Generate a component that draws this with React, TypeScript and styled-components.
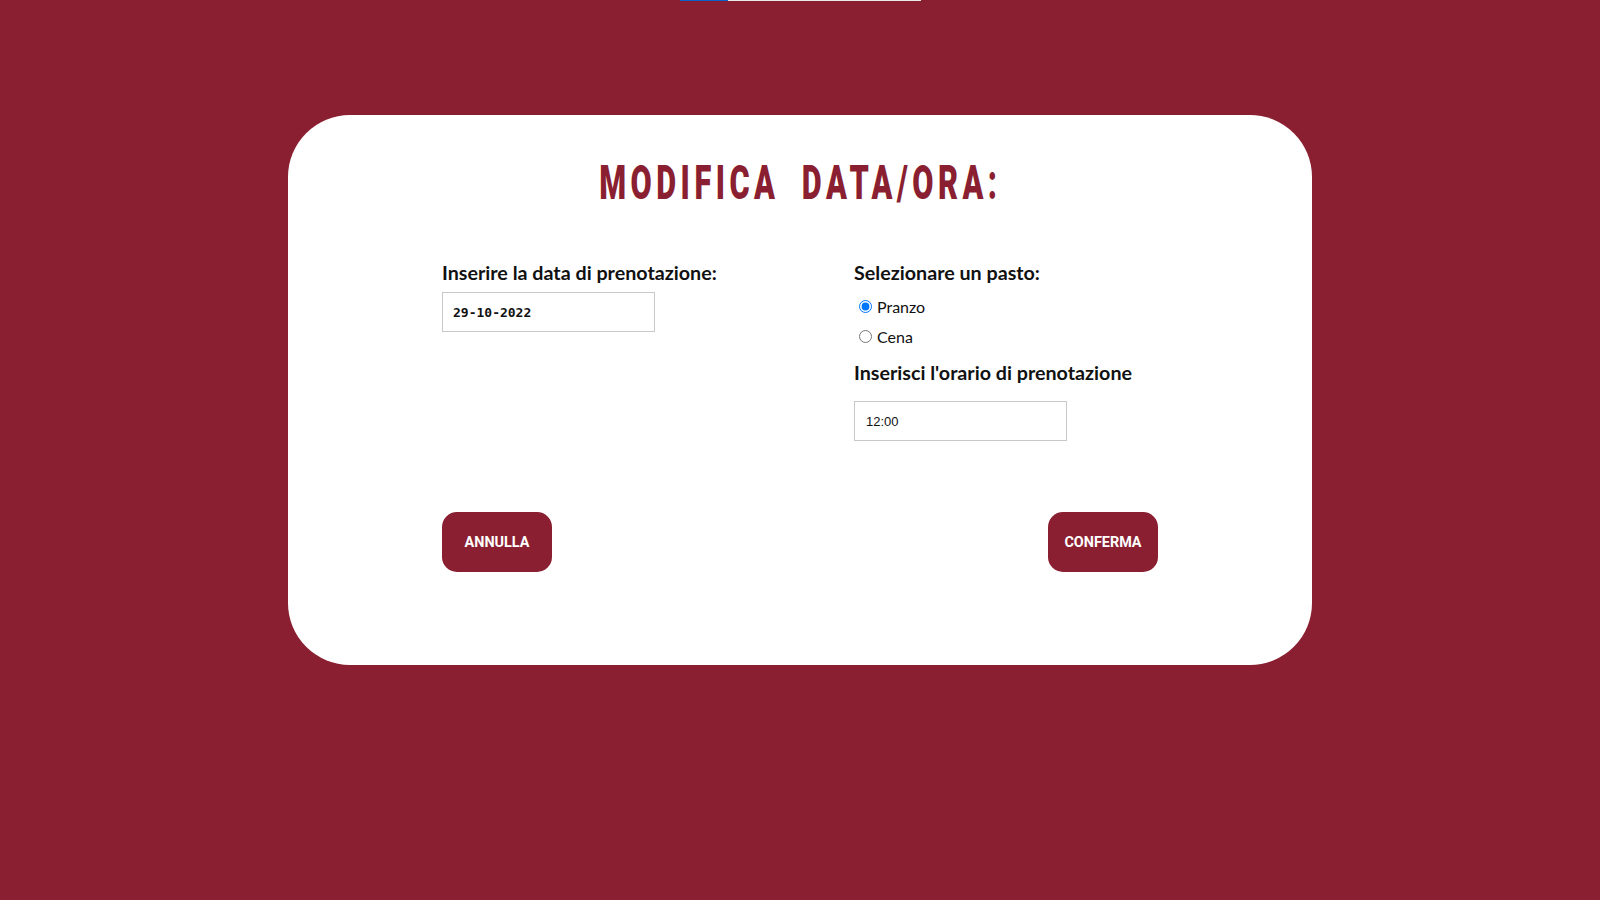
import React from "react";
import styled, { createGlobalStyle } from "styled-components";

const GlobalStyle = createGlobalStyle`
  html, body { margin: 0; padding: 0; }
  body {
    background: #8a1f31;
    font-family: Lato, "Noto Sans", sans-serif;
    min-height: 900px;
  }
`;

const TopBar = styled.div`
  display: flex;
  width: 241px;
  height: 1px;
  margin: 0 auto;
  background: #e9e9e9;
`;

const TopBarFill = styled.div`
  width: 48px;
  height: 100%;
  background: #0a62c9;
`;

const Card = styled.main`
  box-sizing: border-box;
  width: 1024px;
  height: 550px;
  margin: 114px auto 0;
  background: #ffffff;
  border-radius: 62px;
  padding-top: 38px;
`;

const Title = styled.h1`
  margin: 0;
  text-align: center;
  line-height: 60px;
  height: 60px;
`;

const TitleText = styled.span`
  display: inline-block;
  transform: scaleX(0.64);
  transform-origin: center;
  font-family: Roboto, "Liberation Sans", sans-serif;
  font-weight: 900;
  font-size: 48px;
  letter-spacing: 7px;
  word-spacing: 16px;
  white-space: nowrap;
  color: #8a1f31;
`;

const Form = styled.form`
  width: 716px;
  margin: 0 auto;
  padding-top: 48px;
`;

const Columns = styled.div`
  display: grid;
  grid-template-columns: 412px 1fr;
`;

const Column = styled.div`
  display: flex;
  flex-direction: column;
  align-items: flex-start;
`;

const Label = styled.label<{ $top?: number }>`
  display: block;
  margin-top: ${(p) => p.$top ?? 0}px;
  font-family: Lato, sans-serif;
  font-weight: 700;
  font-size: 19.7px;
  line-height: 24px;
  color: #111;
`;

const TextField = styled.input<{ $mono?: boolean; $top?: number }>`
  box-sizing: border-box;
  width: 213px;
  height: 40px;
  margin-top: ${(p) => p.$top ?? 7}px;
  padding: 0 ${(p) => (p.$mono ? 10 : 11)}px;
  border: 1px solid #c8c8c8;
  border-radius: 0;
  outline: none;
  background: #fff;
  color: #111;
  font-family: ${(p) => (p.$mono ? '"DejaVu Sans Mono", monospace' : '"Liberation Sans", Arial, sans-serif')};
  font-weight: ${(p) => (p.$mono ? 700 : 400)};
  font-size: 13px;
`;

const RadioGroup = styled.div`
  display: flex;
  flex-direction: column;
  margin-top: 6px;
`;

const RadioRow = styled.label`
  display: flex;
  align-items: center;
  height: 30px;
  font-family: Lato, sans-serif;
  font-size: 16px;
  color: #111;
  input {
    margin: 0 5px 0 5px;
    width: 13px;
    height: 13px;
  }
`;

const Actions = styled.div`
  display: flex;
  justify-content: space-between;
  margin-top: 71px;
`;

const Button = styled.button`
  width: 110px;
  height: 60px;
  border: none;
  border-radius: 15px;
  background: #8a1f31;
  color: #fff;
  font-family: Roboto, "Liberation Sans", sans-serif;
  font-weight: 700;
  font-size: 14.4px;
  cursor: pointer;
`;

export default function App() {
  return (
    <>
      <GlobalStyle />
      <TopBar>
        <TopBarFill />
      </TopBar>
      <Card>
        <Title>
          <TitleText>MODIFICA DATA/ORA:</TitleText>
        </Title>
        <Form onSubmit={(e) => e.preventDefault()}>
          <Columns>
            <Column>
              <Label htmlFor="data">Inserire la data di prenotazione:</Label>
              <TextField id="data" $mono readOnly defaultValue="29-10-2022" />
            </Column>
            <Column>
              <Label>Selezionare un pasto:</Label>
              <RadioGroup>
                <RadioRow>
                  <input type="radio" name="pasto" defaultChecked />
                  Pranzo
                </RadioRow>
                <RadioRow>
                  <input type="radio" name="pasto" />
                  Cena
                </RadioRow>
              </RadioGroup>
              <Label htmlFor="ora" $top={10}>Inserisci l'orario di prenotazione</Label>
              <TextField id="ora" $top={16} readOnly defaultValue="12:00" />
            </Column>
          </Columns>
          <Actions>
            <Button type="button">ANNULLA</Button>
            <Button type="submit">CONFERMA</Button>
          </Actions>
        </Form>
      </Card>
    </>
  );
}
